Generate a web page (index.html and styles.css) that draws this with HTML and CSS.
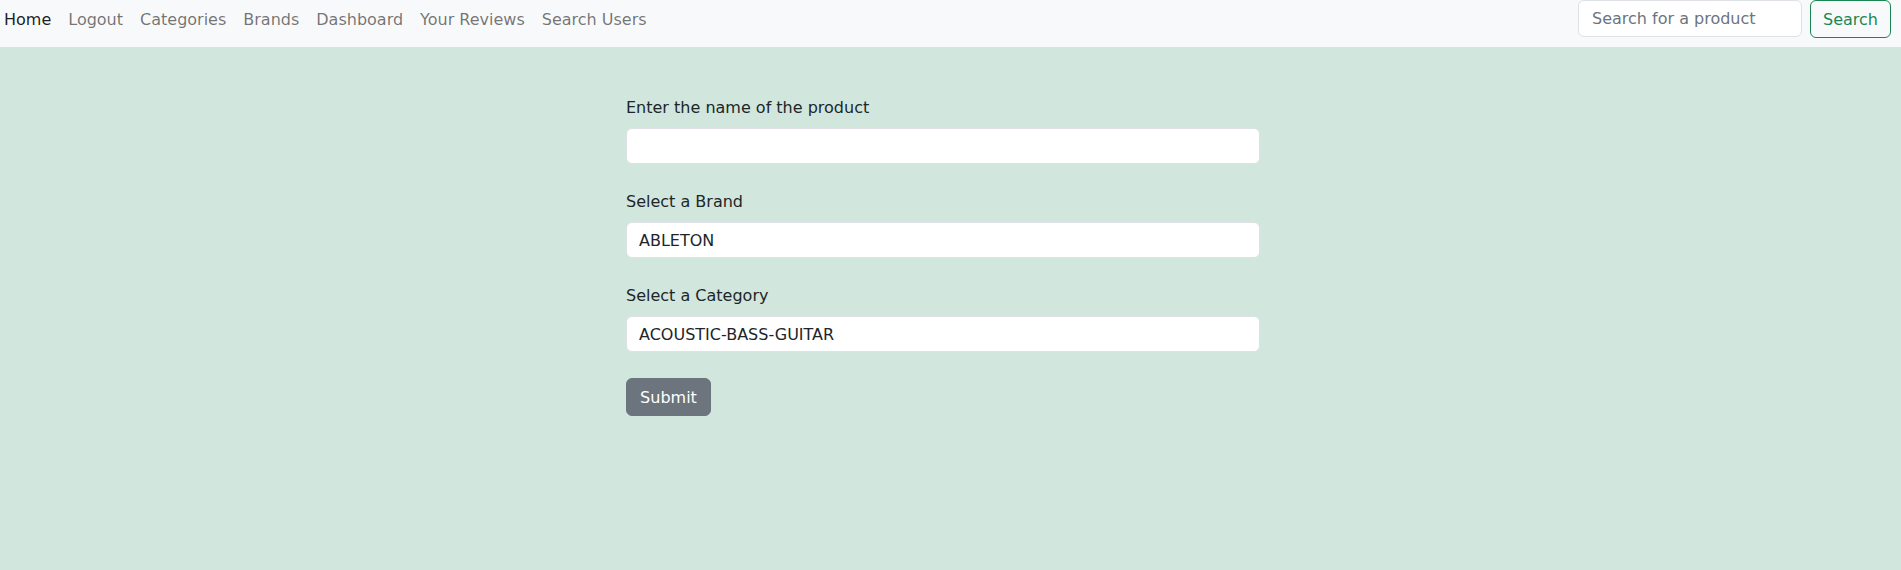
FILE: index.html
```html
<!DOCTYPE html>
<html>
<head>
<meta charset="utf-8">
<link rel="stylesheet" href="styles.css">
</head>
<body>
<nav class="navbar">
  <ul class="nav-links">
    <li><a class="nav-link active" href="#">Home</a></li>
    <li><a class="nav-link" href="#">Logout</a></li>
    <li><a class="nav-link" href="#">Categories</a></li>
    <li><a class="nav-link" href="#">Brands</a></li>
    <li><a class="nav-link" href="#">Dashboard</a></li>
    <li><a class="nav-link" href="#">Your Reviews</a></li>
    <li><a class="nav-link" href="#">Search Users</a></li>
  </ul>
  <form class="search-form">
    <input class="search-input" type="text" placeholder="Search for a product">
    <button class="search-btn" type="button">Search</button>
  </form>
</nav>
<main class="content">
  <form class="product-form">
    <div class="field">
      <label class="field-label">Enter the name of the product</label>
      <div class="field-box"></div>
    </div>
    <div class="field">
      <label class="field-label">Select a Brand</label>
      <div class="field-box">ABLETON</div>
    </div>
    <div class="field">
      <label class="field-label">Select a Category</label>
      <div class="field-box">ACOUSTIC-BASS-GUITAR</div>
    </div>
    <button class="submit-btn" type="button">Submit</button>
  </form>
</main>
</body>
</html>
```
FILE: styles.css
```css
* { box-sizing: border-box; }
html, body { margin: 0; padding: 0; }
body {
  width: 1901px;
  height: 570px;
  background: #d1e7dd;
  font-family: "DejaVu Sans", "Liberation Sans", sans-serif;
  font-size: 16px;
  color: #212529;
  overflow: hidden;
}
.navbar {
  height: 47px;
  background: #f8f9fa;
  display: flex;
  align-items: flex-start;
  justify-content: space-between;
  padding: 0 10px 0 4px;
}
.nav-links {
  list-style: none;
  margin: 0;
  padding: 0;
  display: flex;
  gap: 17px;
  height: 38px;
  align-items: center;
}
.nav-link {
  text-decoration: none;
  color: rgba(0,0,0,0.55);
  font-size: 16px;
}
.nav-link.active { color: rgba(0,0,0,0.9); }
.search-form {
  display: flex;
  gap: 8px;
}
.search-input {
  width: 224px;
  height: 37px;
  border: 1px solid #dee2e6;
  border-radius: 6px;
  background: #fff;
  padding: 0 13px;
  font-family: inherit;
  font-size: 16px;
  color: #212529;
  outline: none;
}
.search-input::placeholder { color: #6c757d; }
.search-btn {
  width: 81px;
  height: 38px;
  border: 1px solid #198754;
  border-radius: 6px;
  background: transparent;
  color: #198754;
  font-family: inherit;
  font-size: 16px;
  padding: 0;
}
.content {
  padding: 49px 0 0 626px;
}
.product-form {
  width: 634px;
  display: flex;
  flex-direction: column;
  gap: 26px;
}
.field {
  display: flex;
  flex-direction: column;
  gap: 8px;
}
.field-label {
  line-height: 24px;
  font-size: 16px;
}
.field-box {
  height: 36px;
  background: #fff;
  border: 1px solid #dee2e6;
  border-radius: 6px;
  padding: 0 12px;
  display: flex;
  align-items: center;
  font-size: 16px;
}
.submit-btn {
  align-self: flex-start;
  width: 85px;
  height: 38px;
  border: 1px solid #6c757d;
  border-radius: 6px;
  background: #6c757d;
  color: #fff;
  font-family: inherit;
  font-size: 16px;
  padding: 0;
}
```
